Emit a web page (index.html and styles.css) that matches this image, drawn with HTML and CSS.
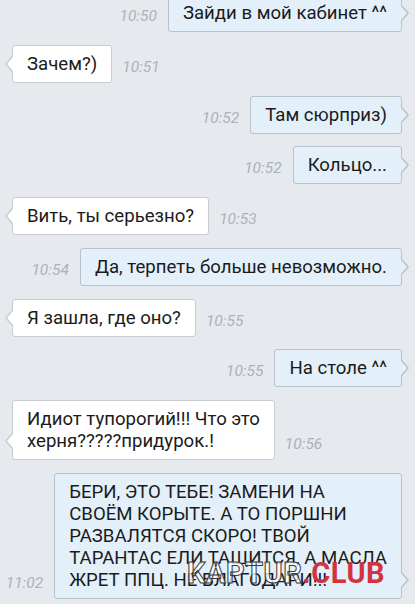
FILE: index.html
```html
<!DOCTYPE html>
<html lang="ru">
<head>
<meta charset="utf-8">
<title>Чат</title>
<link rel="stylesheet" href="styles.css">
</head>
<body>
<div class="chat">
  <div class="row out"><span class="time">10:50</span><div class="bubble">Зайди в мой кабинет ^^</div></div>
  <div class="row in"><div class="bubble">Зачем?)</div><span class="time">10:51</span></div>
  <div class="row out"><span class="time">10:52</span><div class="bubble">Там сюрприз)</div></div>
  <div class="row out"><span class="time">10:52</span><div class="bubble">Кольцо...</div></div>
  <div class="row in"><div class="bubble">Вить, ты серьезно?</div><span class="time">10:53</span></div>
  <div class="row out"><span class="time">10:54</span><div class="bubble">Да, терпеть больше невозможно.</div></div>
  <div class="row in"><div class="bubble">Я зашла, где оно?</div><span class="time">10:55</span></div>
  <div class="row out"><span class="time">10:55</span><div class="bubble">На столе ^^</div></div>
  <div class="row in"><div class="bubble">Идиот тупорогий!!! Что это<br>херня?????придурок.!</div><span class="time">10:56</span></div>
  <div class="row out"><span class="time">11:02</span><div class="bubble">БЕРИ, ЭТО ТЕБЕ! ЗАМЕНИ НА<br>СВОЁМ КОРЫТЕ. А ТО ПОРШНИ<br>РАЗВАЛЯТСЯ СКОРО! ТВОЙ<br>ТАРАНТАС ЕЛИ ТАЩИТСЯ, А МАСЛА<br>ЖРЕТ ППЦ. НЕ БЛАГОДАРИ!!!</div></div>
</div>
<div class="watermark"><span class="wm-a">KAPTUR</span><span class="wm-b">.CLUB</span></div>
</body>
</html>
```

FILE: styles.css
```css
html, body {
  margin: 0;
  padding: 0;
}
body {
  background: #e6eaee;
  font-family: Roboto, "Noto Sans", sans-serif;
  height: 604px;
  overflow: hidden;
  position: relative;
}
.chat {
  display: flex;
  flex-direction: column;
  gap: 12.75px;
  padding: 0 13px 0 12px;
  margin-top: -6px;
}
.row {
  display: flex;
  align-items: flex-end;
  gap: 10px;
}
.row.out {
  justify-content: flex-end;
  gap: 11px;
}
.bubble {
  position: relative;
  padding: 7px 14px;
  font-size: 18.6px;
  line-height: 22px;
  color: #1b1b1b;
  border: 1px solid;
  border-radius: 3px;
  max-width: 330px;
  white-space: nowrap;
}
.in .bubble {
  background: #ffffff;
  border-color: #c8ccd1;
}
.out .bubble {
  background: #e3f0fa;
  border-color: #b7c2cb;
}
.bubble::before,
.bubble::after {
  content: "";
  position: absolute;
  width: 0;
  height: 0;
  border-top: 8px solid transparent;
  border-bottom: 8px solid transparent;
}
.out .bubble::before {
  right: -8px;
  bottom: 10px;
  border-left: 7px solid #b7c2cb;
}
.out .bubble::after {
  right: -6px;
  bottom: 11px;
  border-top-width: 7px;
  border-bottom-width: 7px;
  border-left: 6px solid #e3f0fa;
}
.in .bubble::before {
  left: -8px;
  bottom: 10px;
  border-right: 7px solid #c8ccd1;
}
.in .bubble::after {
  left: -6px;
  bottom: 11px;
  border-top-width: 7px;
  border-bottom-width: 7px;
  border-right: 6px solid #ffffff;
}
.time {
  font-size: 15.5px;
  line-height: 18px;
  font-style: italic;
  color: #abb2b9;
  margin-bottom: 7px;
}
.watermark {
  position: absolute;
  left: 187px;
  top: 558px;
  font-size: 29px;
  line-height: 30px;
  font-weight: 700;
  letter-spacing: 0.5px;
}
.wm-a {
  color: rgba(255, 255, 255, 0.8);
  -webkit-text-stroke: 1px #3a3a3a;
}
.wm-b {
  color: #d3323e;
}
```
